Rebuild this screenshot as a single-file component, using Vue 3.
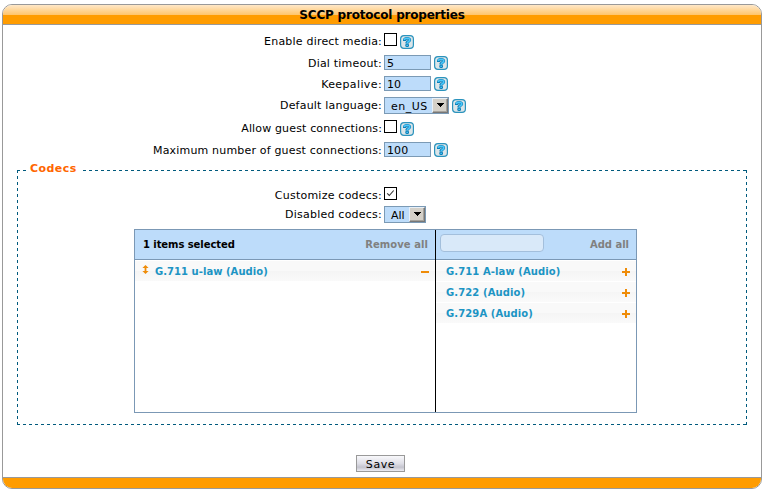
<script setup>
const rows = [
  { label: 'Enable direct media:', type: 'check', h: 22, icon: 2, ls: 0.2 },
  { label: 'Dial timeout:', type: 'text', value: '5', h: 21, icon: 1, ls: 0.2 },
  { label: 'Keepalive:', type: 'text', value: '10', h: 21, icon: 1, ls: 0.38 },
  { label: 'Default language:', type: 'select', value: 'en_US', h: 23, icon: 2, ls: 0.2 },
  { label: 'Allow guest connections:', type: 'check', h: 22, icon: 2, ls: 0.15 },
  { label: 'Maximum number of guest connections:', type: 'text', value: '100', h: 15, icon: 1, ls: 0.18 },
]
const available = ['G.711 A-law (Audio)', 'G.722 (Audio)', 'G.729A (Audio)']
</script>

<template>
  <main class="panel">
    <header class="title"><span>SCCP protocol properties</span></header>
    <section class="body">
      <div v-for="r in rows" :key="r.label" class="row" :style="{ height: r.h + 'px' }">
        <label class="label" :style="{ letterSpacing: r.ls + 'px' }">{{ r.label }}</label>
        <span v-if="r.type === 'check'" class="check"></span>
        <span v-else-if="r.type === 'text'" class="input">{{ r.value }}</span>
        <span v-else class="select language"><span class="choice">{{ r.value }}</span><span class="arrow"><svg width="7" height="4" viewBox="0 0 7 4" shape-rendering="crispEdges"><path d="M0 0h7v1H6v1H5v1H4v1H3V3H2V2H1V1H0z" /></svg></span></span>
        <svg class="help" :style="{ marginTop: r.icon + 'px' }" width="14" height="14" viewBox="0 0 14 14">
          <rect x=".6" y=".6" width="12.8" height="12.8" rx="3.4" fill="#dbe5e9" stroke="#2b93bd" stroke-width="1.2" />
          <path d="M3 5.9V5C3 3.1 4.6 2 7 2s4.2 1.1 4.2 3c0 2.1-2.4 2.2-2.4 3.6H5.4c0-2.7 2.3-2.6 2.3-3.5 0-.9-1.3-.8-1.4.8z" fill="#0b7fb8" />
          <rect x="5.3" y="8.5" width="3.7" height="3.6" rx="1.5" fill="#0b7fb8" />
          <path d="M4.4 5C4.5 3.7 5.5 3.3 7 3.3s2.8.5 2.8 1.7c0 1.5-2.6 1.5-2.6 3.2" fill="none" stroke="#4cc8fa" stroke-width="1.6" />
          <rect x="6.4" y="9.7" width="1.5" height="1.3" fill="#4cc8fa" />
        </svg>
      </div>
      <div class="group">
        <div class="legend">Codecs</div>
        <div class="row customize">
          <label class="label">Customize codecs:</label>
          <span class="check"><svg width="11" height="11" viewBox="0 0 11 11"><path d="M2.2 5.4l2.1 2.1L8.7 2.5" fill="none" stroke="#333" stroke-width="1.1" /></svg></span>
        </div>
        <div class="row disabled">
          <label class="label">Disabled codecs:</label>
          <span class="select all"><span class="choice">All</span><span class="arrow"><svg width="7" height="4" viewBox="0 0 7 4" shape-rendering="crispEdges"><path d="M0 0h7v1H6v1H5v1H4v1H3V3H2V2H1V1H0z" /></svg></span></span>
        </div>
        <div class="picker">
          <div class="selected">
            <div class="bar"><b class="count">1 items selected</b><b class="action remove">Remove all</b></div>
            <div class="item">
              <svg class="sort" width="7" height="9" viewBox="0 0 7 9"><path d="M3.5 0L6.6 3H4.4v3h2.2L3.5 9 .4 6h2.2V3H.4z" fill="#ef8c08" /></svg>
              <span class="name">G.711 u-law (Audio)</span>
              <svg class="sign" width="8" height="8" shape-rendering="crispEdges"><path d="M0 3h8v2H0z" fill="#ef8c08" /></svg>
            </div>
          </div>
          <div class="available">
            <div class="bar"><span class="search"></span><b class="action add">Add all</b></div>
            <div v-for="a in available" :key="a" class="item">
              <span class="name">{{ a }}</span>
              <svg class="sign" width="8" height="8" shape-rendering="crispEdges"><path d="M0 3h3V0h2v3h3v2H5v3H3V5H0z" fill="#ef8c08" /></svg>
            </div>
          </div>
        </div>
      </div>
      <div class="save">Save</div>
    </section>
    <footer class="foot"></footer>
  </main>
</template>

<style>
body { margin: 0; background: #fff; }
#app { padding: 4px 2px 2px; }
</style>
<style scoped>
* { box-sizing: border-box; }
.panel {
  width: 760px; height: 485px; border: 1px solid #999; border-radius: 10px; overflow: hidden;
  font: 11px "DejaVu Sans", sans-serif; color: #000; display: flex; flex-direction: column;
}
.title {
  height: 20px; flex: none; border-bottom: 1px solid #999; text-align: center;
  background: linear-gradient(#ffe8c8, #ffc56b 10px, #ff9c00 10px);
  font-size: 12px; letter-spacing: -.2px; font-weight: bold; line-height: 21px; white-space: nowrap;
}
.body { flex: 1; padding-top: 8px; display: flex; flex-direction: column; }
.row { display: flex; align-items: flex-start; }
.label { width: 379px; flex: none; text-align: right; line-height: 18px; letter-spacing: .23px; white-space: nowrap; margin-right: 2px; }
.check { width: 13px; height: 13px; border: 1px solid #000; flex: none; background: #fff; display: flex; }
.help { margin-left: 3px; flex: none; }
.input { width: 47px; height: 15px; border: 1px solid #7b9ab5; background: #bddcfa; line-height: 15px; padding-left: 2px; letter-spacing: .1px; }
.select { height: 17px; border: 1px solid #7b9ab5; background: #bddcfa; display: flex; justify-content: space-between; line-height: 17px; padding-left: 6px; }
.language { width: 65px; }
.all { width: 42px; }
.language .choice { letter-spacing: .5px; }
.arrow {
  width: 16px; height: 15px; background: #d4d0c8; display: flex; align-items: center; justify-content: center;
  border: 1px solid; border-color: #e8f0f8 #777 #777 #e8f0f8; box-shadow: inset -1px -1px #a5a29c;
}
.arrow svg { margin: -2px 0 0; }
.group {
  margin: 13px 14px 0; width: 730px; height: 255px; flex: none;
  background:
    repeating-linear-gradient(90deg, #005a7d 0 3px, transparent 3px 6px) top / 100% 1px no-repeat,
    repeating-linear-gradient(90deg, #005a7d 0 3px, transparent 3px 6px) bottom / 100% 1px no-repeat,
    repeating-linear-gradient(#005a7d 0 3px, transparent 3px 6px) left / 1px 100% no-repeat,
    repeating-linear-gradient(#005a7d 0 3px, transparent 3px 6px) right / 1px 100% no-repeat;
}
.legend { width: 57px; height: 16px; margin: -10px 0 11px 9px; padding-left: 4px; background: #fff; color: #f60; font-weight: bold; line-height: 18px; letter-spacing: .45px; }
.customize { height: 19px; }
.disabled { height: 23px; }
.group .label { width: 365px; }
.picker { width: 503px; height: 184px; margin-left: 117px; border: 1px solid #7b98b5; display: flex; }
.selected { width: 301px; border-right: 1px solid #000; }
.available { flex: 1; }
.bar { height: 30px; background: #bddcfa; border-bottom: 1px solid #7b98b5; display: flex; justify-content: space-between; line-height: 29px; padding: 0 8px; font-size: 10px; margin-bottom: 1px; }
.count { letter-spacing: -.07px; }
.action { color: #808080; letter-spacing: .07px; }
.bar .remove { margin-right: -1px; }
.bar .add { margin-right: -1px; letter-spacing: -.02px; }
.available .bar { padding-left: 4px; }
.search { width: 104px; height: 18px; margin-top: 4px; border: 1px solid #a3bfdc; border-radius: 4px; background: #d9e9f9; }
.item { height: 21px; border-bottom: 1px solid #fff; background: linear-gradient(#f9f9f9 50%, #f5f5f5 50%, #fafafa); display: flex; align-items: center; padding: 0 6px; font-size: 10px; font-weight: bold; color: #1c94c4; }
.available .item { padding-left: 10px; }
.sort { flex: none; margin: -3px 6px 0 1px; }
.name { flex: 1; line-height: 18px; padding-top: 2px; letter-spacing: .1px; white-space: nowrap; }
.selected .name { letter-spacing: .04px; }
.sign { flex: none; margin-top: 2px; }
.save { width: 49px; height: 17px; margin: 30px 0 0 353px; border: 1px solid #999; background: linear-gradient(#f8f8fb, #dedee6 50%, #c4c4ce 75%, #ececf2); text-align: center; line-height: 17px; letter-spacing: .6px; }
.foot { height: 11px; flex: none; border-top: 1px solid #999; background: #ff9c00; }
</style>
